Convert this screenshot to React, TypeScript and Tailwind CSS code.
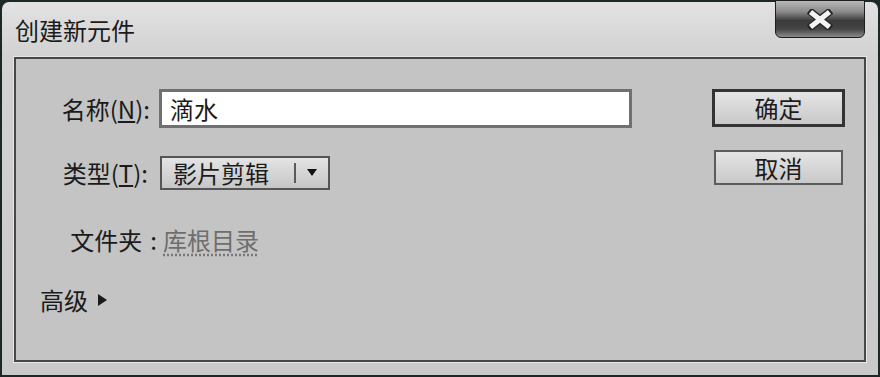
import React from 'react'

const font = "font-['Noto_Sans_CJK_SC','Noto_Sans_CJK_JP',sans-serif]"

function CloseButton() {
  return (
    <div className="-mt-[2px] mr-[13px] flex h-[38px] w-[90px] items-center justify-center rounded-b-[6px] border border-[#1e1e1e] bg-[linear-gradient(to_bottom,#b8b8b8_0%,#8a8a8a_30%,#3a3a3a_55%,#454545_78%,#8a8a8a_100%)]">
      <svg width="26" height="21" viewBox="0 0 26 21">
        <path d="M5 4 L21 17 M21 4 L5 17" stroke="#262626" strokeWidth="7.5" strokeLinecap="square" />
        <path d="M5.5 4.5 L20.5 16.5 M20.5 4.5 L5.5 16.5" stroke="#f4f4f4" strokeWidth="5" strokeLinecap="square" />
      </svg>
    </div>
  )
}

function DialogButton({ label, isDefault }: { label: string; isDefault?: boolean }) {
  return (
    <button
      className={
        isDefault
          ? 'flex h-[38px] w-[133px] items-center justify-center border-[3px] border-[#333333] bg-[linear-gradient(to_bottom,#e4e4e4,#c9c9c9)] text-[24px] leading-none text-[#1c1c1c]'
          : 'flex h-[35px] w-[129px] items-center justify-center border-2 border-[#5c5c5c] bg-[linear-gradient(to_bottom,#e4e4e4,#c9c9c9)] text-[24px] leading-none text-[#1c1c1c]'
      }
    >
      {label}
    </button>
  )
}

export default function App() {
  return (
    <div className={`${font} h-[377px] w-[880px] bg-[#1c2727] p-[2px] text-[#1b1b1b]`}>
      <div className="flex h-full flex-col rounded-t-[7px] bg-[linear-gradient(to_bottom,#e2e2e2_0%,#d2d2d2_14%,#c9c9c9_100%)]">
        {/* title bar */}
        <div className="flex h-[53px] shrink-0 items-start justify-between">
          <div className="pl-[13px] pt-[15px] text-[24px] leading-[26px]">创建新元件</div>
          <CloseButton />
        </div>

        {/* content panel */}
        <div className="mx-[12px] mt-[2px] flex h-[305px] border-2 border-[#474747] bg-[#c4c4c4] pt-[30px] ring-1 ring-[#e6e6e6]">
          <div className="flex flex-1 flex-col">
            <div className="flex h-[39px] items-center">
              <div className="w-[134px] text-right text-[24px] leading-none">
                名称(<span className="underline underline-offset-2">N</span>):
              </div>
              <div className="ml-[9px] flex h-[39px] w-[473px] items-center border-[3px] border-[#707070] bg-white pl-[8px] text-[24px] leading-none">
                滴水
              </div>
            </div>

            <div className="mt-[28px] flex h-[34px] items-center">
              <div className="w-[132px] text-right text-[24px] leading-none">
                类型(<span className="underline underline-offset-2">T</span>):
              </div>
              <div className="ml-[12px] flex h-[34px] w-[170px] items-center border-2 border-[#555555] bg-[linear-gradient(to_bottom,#e4e4e4,#c6c6c6)]">
                <span className="pl-[11px] text-[24px] leading-none">影片剪辑</span>
                <span className="ml-auto h-[20px] w-[2px] bg-[#5a5a5a]" />
                <span className="flex w-[32px] justify-center">
                  <svg width="10" height="8" viewBox="0 0 10 8">
                    <path d="M0 0 L10 0 L5 7 Z" fill="#111111" />
                  </svg>
                </span>
              </div>
            </div>

            <div className="mt-[35px] flex h-[30px] items-center">
              <div className="w-[141px] text-right text-[24px] leading-none">
                文件夹<span className="ml-[8px]">:</span>
              </div>
              <div className="ml-[6px] text-[24px] leading-none text-[#6e6e6e] underline decoration-dotted decoration-[#777777] underline-offset-4">
                库根目录
              </div>
            </div>

            <div className="mt-[30px] flex h-[30px] items-center pl-[24px]">
              <span className="text-[24px] leading-none">高级</span>
              <svg className="ml-[10px]" width="9" height="12" viewBox="0 0 9 12">
                <path d="M0 0 L9 6 L0 12 Z" fill="#1a1a1a" />
              </svg>
            </div>
          </div>

          <div className="mr-[19px] flex w-[133px] flex-col items-center gap-[23px]">
            <DialogButton label="确定" isDefault />
            <DialogButton label="取消" />
          </div>
        </div>
      </div>
    </div>
  )
}
